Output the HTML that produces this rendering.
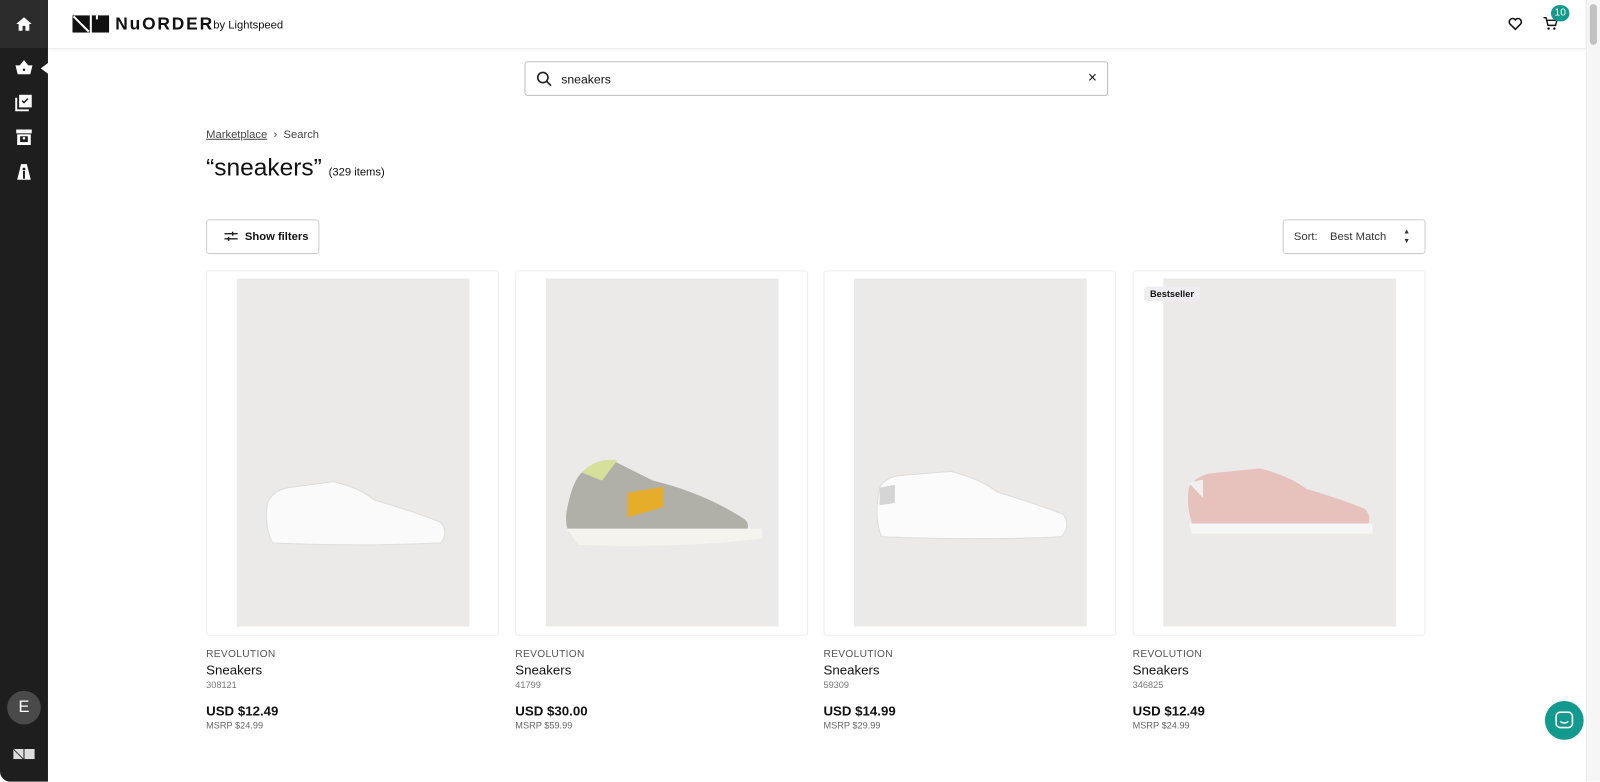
<!DOCTYPE html>
<html><head><meta charset="utf-8"><style>
*{margin:0;padding:0;box-sizing:border-box}
body{width:1600px;height:781px;overflow:hidden;background:#fff;font-family:"Liberation Sans",sans-serif;color:#111;position:relative}
#w{position:absolute;left:0;top:0;width:1568px;height:766px;transform:scale(1.020408);transform-origin:0 0}
.side{position:absolute;left:0;top:0;width:47px;height:766px;background:#1e1e1e;border-bottom-left-radius:10px}
.side .top{height:47px;background:#2c2c2c}
.ic{position:absolute;left:14px;width:19px;height:19px}
.hdr{position:absolute;left:47px;top:0;right:14px;height:48px;border-bottom:1px solid #eee;box-shadow:0 1px 3px rgba(0,0,0,.05)}
.scroll{position:absolute;right:0;top:0;width:14px;height:766px;background:#f6f6f6;border-left:1px solid #e8e8e8}
.scroll div{position:absolute;left:3px;top:4px;width:7px;height:40px;background:#c2c2c2;border-radius:4px}
.search{position:absolute;left:514px;top:60px;width:572px;height:34px;border:1px solid #bbb;border-radius:3px;font-size:12px}
.card{position:absolute;top:265px;width:287px;height:358px;border:1px solid #eee;border-radius:3px}
.card .img{position:absolute;left:29px;top:7px;width:228px;height:341px;background:#ebeae8}
.info{position:absolute;top:636px;font-size:12px}
.brand{font-size:10px;color:#555;letter-spacing:.3px}
.name{font-size:13px;margin-top:2px}
.sku{font-size:9px;color:#777;margin-top:2px}
.price{font-size:13px;font-weight:bold;margin-top:13px}
.msrp{font-size:9px;color:#666;margin-top:2px}
</style></head><body><div id="w">
<div class="side"><div class="top"></div>
<svg class="ic" style="top:14px" viewBox="0 0 20 20"><path d="M10 3 2 10h2.5v7h4v-5h3v5h4v-7H18z" fill="#fff"/></svg>
<svg class="ic" style="top:57px" viewBox="0 0 20 20"><path d="M2 8h16l-2 8H4z M6 8l4-5 4 5" fill="#fff" stroke="#fff" stroke-width="1.2"/><circle cx="10" cy="12" r="1.3" fill="#1e1e1e"/></svg>
<svg style="position:absolute;left:40px;top:61px" width="8" height="12"><path d="M8 0 0 6 8 12z" fill="#fff"/></svg>
<svg class="ic" style="top:91px" viewBox="0 0 20 20"><rect x="5" y="2" width="13" height="13" fill="#fff"/><path d="M2 5v13h13" stroke="#fff" stroke-width="2" fill="none"/><path d="M8 8l2 2 4-4" stroke="#1e1e1e" stroke-width="1.5" fill="none"/></svg>
<svg class="ic" style="top:125px" viewBox="0 0 20 20"><rect x="2" y="2" width="16" height="4" fill="#fff"/><rect x="3" y="7" width="14" height="11" fill="#fff"/><rect x="6" y="9" width="8" height="6" fill="#1e1e1e"/><circle cx="10" cy="11" r="1.3" fill="#fff"/></svg>
<svg class="ic" style="top:159px" viewBox="0 0 20 20"><path d="M7 2h6l4 16H3z" fill="#fff"/><circle cx="10" cy="7" r="1.5" fill="#1e1e1e"/><path d="M9 9h2v8H9z" fill="#1e1e1e"/></svg>
<div style="position:absolute;left:7px;top:677px;width:33px;height:33px;border-radius:50%;background:#4a4a4a;color:#fff;font-size:16px;text-align:center;line-height:33px">E</div>
<svg style="position:absolute;left:13px;top:734px" width="21" height="10"><rect x="0" y="0" width="10" height="10" fill="#ddd"/><rect x="11" y="0" width="10" height="10" fill="#ddd"/><path d="M0 0l10 10" stroke="#333"/></svg>
</div>
<div class="hdr">
<svg style="position:absolute;left:24px;top:15px" width="36" height="17"><rect x="0" y="0" width="17" height="17" fill="#111"/><path d="M1 1l15 15" stroke="#fff" stroke-width="2"/><path d="M19 0h17v17H19z" fill="#111"/><path d="M24 0v4" stroke="#fff" stroke-width="2"/></svg>
<div style="position:absolute;left:66px;top:14px;font-size:17px;font-weight:bold;letter-spacing:1.8px">NuORDER</div>
<div style="position:absolute;left:162px;top:19px;font-size:11px">by Lightspeed</div>
<svg style="position:absolute;left:1431px;top:17px" width="14" height="13" viewBox="0 0 24 22"><path d="M12 20 3 11a5 5 0 0 1 9-7 5 5 0 0 1 9 7z" fill="none" stroke="#111" stroke-width="2.6"/></svg>
<svg style="position:absolute;left:1465px;top:16px" width="15" height="14" viewBox="0 0 24 22"><path d="M1 2h4l3 12h12l2-8H7" fill="none" stroke="#111" stroke-width="2.2"/><circle cx="9" cy="19" r="1.8"/><circle cx="18" cy="19" r="1.8"/></svg>
<div style="position:absolute;left:1473px;top:5px;width:18px;height:16px;border-radius:8px;background:#139a8e;color:#fff;font-size:10px;text-align:center;line-height:16px">10</div>
</div>
<div class="scroll"><div></div></div>
<div class="search">
<svg style="position:absolute;left:11px;top:9px" width="15" height="15"><circle cx="6" cy="6" r="5" fill="none" stroke="#222" stroke-width="1.6"/><path d="M10 10l4 4" stroke="#222" stroke-width="1.6"/></svg>
<span style="position:absolute;left:35px;top:10px">sneakers</span>
<span style="position:absolute;right:10px;top:7px;font-size:15px">×</span>
</div>
<div style="position:absolute;left:202px;top:126px;font-size:11px;color:#444"><u>Marketplace</u> &nbsp;›&nbsp; Search</div>
<div style="position:absolute;left:202px;top:151px;font-size:24px">“sneakers” <span style="font-size:11px">(329 items)</span></div>
<div style="position:absolute;left:202px;top:215px;width:111px;height:34px;border:1px solid #ccc;border-radius:3px;font-size:11px;font-weight:bold;line-height:32px;padding-left:37px">Show filters
<svg style="position:absolute;left:17px;top:11px" width="13" height="10"><path d="M0 2h13M0 7h13" stroke="#222" stroke-width="1.3"/><path d="M8 0v4M4 5v4" stroke="#222" stroke-width="1.5"/></svg></div>
<div style="position:absolute;left:1257px;top:215px;width:140px;height:34px;border:1px solid #ccc;border-radius:3px;font-size:11px;line-height:32px;padding-left:10px;color:#333">Sort: &nbsp;&nbsp;&nbsp;Best Match<span style="position:absolute;right:14px;top:0;font-size:7px;line-height:9px;padding-top:7px">▲<br>▼</span></div>

<div class="card" style="left:202px"><div class="img"><svg width="228" height="341"><path d="M30 220q5-12 20-15l45-6q25 6 40 18 50 15 65 22 8 10 0 20-80 4-165 0-8-15-5-39z" fill="#fafafa" stroke="#ddd"/></svg></div></div>
<div class="card" style="left:505px"><div class="img"><svg width="228" height="341"><path d="M20 230q5-30 15-40l30-12 40 20q50 12 90 38 6 6 0 14-80 6-165 5-12-5-10-25z" fill="#b0b0a8"/><path d="M20 245h192v10q-90 10-180 6z" fill="#f4f3ee"/><path d="M80 210l35-6 0 20-35 10z" fill="#e6ad2a"/><path d="M35 190q15-15 35-12l-15 20z" fill="#d6e09b"/></svg></div></div>
<div class="card" style="left:807px"><div class="img"><svg width="228" height="341"><path d="M25 205q5-10 20-12l50-4q30 8 45 20 45 14 65 22 8 12-2 22-82 4-176 0-8-18-2-48z" fill="#fbfbfb" stroke="#ddd"/><path d="M25 205l15-3v18l-15 2z" fill="#d4d5d4"/></svg></div></div>
<div class="card" style="left:1110px"><div class="img"><svg width="228" height="341"><path d="M25 205q5-10 20-14l50-5q30 8 45 20 40 12 58 20 8 10 0 18-80 4-168 0-8-18-5-39z" fill="#e7c2bd"/><path d="M25 240h180v10H28z" fill="#f6f6f6"/><path d="M25 200l14-3v18z" fill="#f0f0f0"/></svg></div>
<div style="position:absolute;left:10px;top:15px;background:#eeeef2;border-radius:3px;font-size:9px;font-weight:bold;padding:2px 6px">Bestseller</div></div>

<div class="info" style="left:202px"><div class="brand">REVOLUTION</div><div class="name">Sneakers</div><div class="sku">308121</div><div class="price">USD $12.49</div><div class="msrp">MSRP $24.99</div></div>
<div class="info" style="left:505px"><div class="brand">REVOLUTION</div><div class="name">Sneakers</div><div class="sku">41799</div><div class="price">USD $30.00</div><div class="msrp">MSRP $59.99</div></div>
<div class="info" style="left:807px"><div class="brand">REVOLUTION</div><div class="name">Sneakers</div><div class="sku">59309</div><div class="price">USD $14.99</div><div class="msrp">MSRP $29.99</div></div>
<div class="info" style="left:1110px"><div class="brand">REVOLUTION</div><div class="name">Sneakers</div><div class="sku">346825</div><div class="price">USD $12.49</div><div class="msrp">MSRP $24.99</div></div>

<div style="position:absolute;left:1514px;top:687px;width:38px;height:38px;border-radius:50%;background:#139a8e">
<svg style="position:absolute;left:10px;top:10px" width="18" height="18"><rect x="1" y="1" width="16" height="15" rx="4" fill="none" stroke="#fff" stroke-width="1.6"/><path d="M5 10q4 3 8 0" stroke="#fff" stroke-width="1.5" fill="none"/></svg></div>
</div></body></html>
